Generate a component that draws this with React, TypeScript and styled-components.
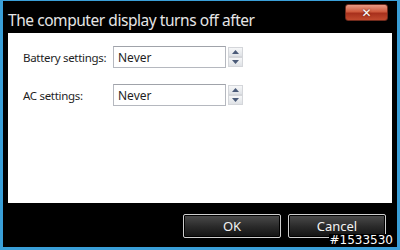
import React from 'react';
import styled, { createGlobalStyle } from 'styled-components';

const GlobalStyle = createGlobalStyle`
  html, body {
    margin: 0;
    padding: 0;
    background: #000;
  }
  #root {
    width: 400px;
    height: 250px;
  }
`;

const Window = styled.div`
  position: relative;
  width: 400px;
  height: 250px;
  box-sizing: border-box;
  background: #000;
  border: 3px solid #3a9fd8;
  border-top-width: 1px;
  display: flex;
  flex-direction: column;
  font-family: 'Noto Sans', 'Open Sans', sans-serif;
  overflow: hidden;
`;

const TitleBar = styled.div`
  height: 32px;
  display: flex;
  align-items: center;
  justify-content: space-between;
  padding: 0 9px 0 5px;
`;

const Title = styled.div`
  color: #e6e6e6;
  font-size: 15.5px;
  letter-spacing: -0.45px;
  margin-top: 5px;
`;

const CloseButton = styled.div`
  width: 43px;
  height: 17px;
  margin-top: -9px;
  box-sizing: border-box;
  border: 1px solid #6e2a1c;
  border-radius: 3px;
  background: linear-gradient(to bottom, #e89a84 0%, #cf5a3d 45%, #a8301c 55%, #c14a2e 100%);
  display: flex;
  align-items: center;
  justify-content: center;
  color: #fff;
  font-family: 'DejaVu Sans', sans-serif;
  font-weight: bold;
  font-size: 12px;
  text-shadow: 0 0 2px #5a1a10;
`;

const Panel = styled.div`
  margin: 0 5px;
  height: 170px;
  background: #fff;
  padding: 13px 15px 0 15px;
  box-sizing: border-box;
  display: flex;
  flex-direction: column;
  gap: 16px;
`;

const FieldRow = styled.div`
  display: flex;
  align-items: center;
  height: 22px;
`;

const Label = styled.div`
  width: 90px;
  font-size: 11.5px;
  color: #1e1e1e;
  letter-spacing: -0.3px;
`;

const Field = styled.div`
  width: 113px;
  height: 22px;
  box-sizing: border-box;
  border: 1px solid #b5b8bf;
  border-top-color: #a0a3aa;
  padding-left: 4px;
  display: flex;
  align-items: center;
  font-size: 12px;
  color: #1e1e1e;
`;

const Spinner = styled.div`
  margin-left: 2px;
  width: 15px;
  height: 20px;
  display: flex;
  flex-direction: column;
`;

const SpinButton = styled.div`
  flex: 1;
  box-sizing: border-box;
  border: 1px solid #d4d6da;
  background: linear-gradient(to bottom, #f6f7f8, #dfe2e6);
  display: flex;
  align-items: center;
  justify-content: center;
`;

const Footer = styled.div`
  flex: 1;
  display: flex;
  justify-content: flex-end;
  align-items: flex-start;
  gap: 7px;
  padding: 11px 11px 0 0;
`;

const DialogButton = styled.div`
  width: 98px;
  height: 24px;
  box-sizing: border-box;
  border: 1px solid #cfcfcf;
  border-radius: 2px;
  background: linear-gradient(to bottom, #4c4c4c 0%, #2c2c2c 50%, #111 100%);
  color: #f2f2f2;
  font-size: 13px;
  display: flex;
  align-items: center;
  justify-content: center;
  box-shadow: inset 0 0 0 1px #000;
`;

const Watermark = styled.div`
  position: absolute;
  right: 3px;
  bottom: 0px;
  background: #000;
  color: #fff;
  font-family: 'DejaVu Sans', sans-serif;
  font-size: 12px;
  line-height: 13px;
  padding: 0 1px;
`;

const Arrow = ({ up }: { up: boolean }) => (
  <svg width="7" height="4" viewBox="0 0 7 4">
    <path d={up ? 'M0 4 L3.5 0 L7 4 Z' : 'M0 0 L3.5 4 L7 0 Z'} fill="#4a5a78" />
  </svg>
);

function SettingRow({ label, value }: { label: string; value: string }) {
  return (
    <FieldRow>
      <Label>{label}</Label>
      <Field>{value}</Field>
      <Spinner>
        <SpinButton><Arrow up={true} /></SpinButton>
        <SpinButton><Arrow up={false} /></SpinButton>
      </Spinner>
    </FieldRow>
  );
}

export default function App() {
  return (
    <>
      <GlobalStyle />
      <Window>
        <TitleBar>
          <Title>The computer display turns off after</Title>
          <CloseButton>✕</CloseButton>
        </TitleBar>
        <Panel>
          <SettingRow label="Battery settings:" value="Never" />
          <SettingRow label="AC settings:" value="Never" />
        </Panel>
        <Footer>
          <DialogButton>OK</DialogButton>
          <DialogButton>Cancel</DialogButton>
        </Footer>
        <Watermark>#1533530</Watermark>
      </Window>
    </>
  );
}
